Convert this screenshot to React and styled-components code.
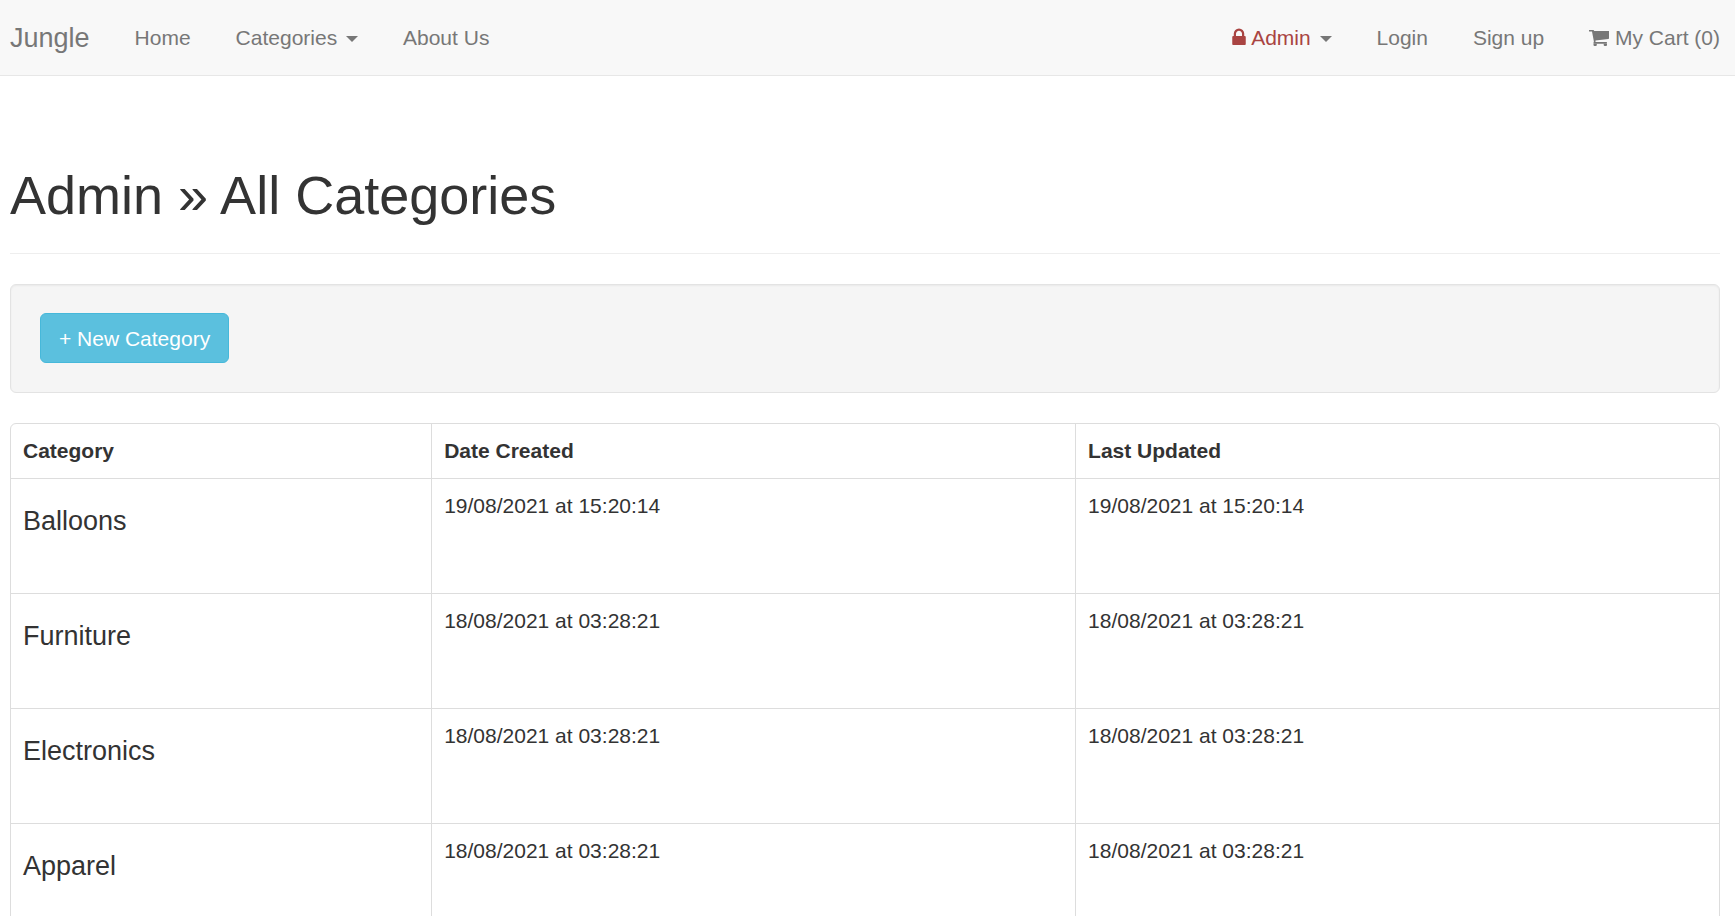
import React from 'react';
import styled, { createGlobalStyle } from 'styled-components';

const GlobalStyle = createGlobalStyle`
  *, *::before, *::after { box-sizing: border-box; }
  body {
    margin: 0;
    background: #fff;
    color: #333;
    font-family: "Liberation Sans", Arial, sans-serif;
    font-size: 21px;
    line-height: 30px;
  }
`;

const Navbar = styled.nav`
  display: flex;
  align-items: center;
  justify-content: space-between;
  flex-wrap: wrap;
  min-height: 76px;
  padding: 0 15px 0 10px;
  background: #f8f8f8;
  border-bottom: 1px solid #e7e7e7;
`;

const NavGroup = styled.div`
  display: flex;
  align-items: center;
  gap: 45px;
`;

const Brand = styled.a`
  color: #777;
  font-size: 27px;
  text-decoration: none;
`;

const NavLink = styled.a`
  color: #777;
  text-decoration: none;
  white-space: nowrap;
`;

const NavToggle = styled.button`
  padding: 0;
  border: 0;
  background: none;
  color: #777;
  font: inherit;
  white-space: nowrap;
  cursor: pointer;
`;

const Danger = styled.span`
  color: #a94442;
`;

const Caret = styled.span`
  display: inline-block;
  margin-left: 3px;
  vertical-align: middle;
  border-top: 6px solid;
  border-right: 6px solid transparent;
  border-left: 6px solid transparent;
`;

const Icon = styled.svg`
  height: 21px;
  vertical-align: -3px;
  fill: currentColor;
`;

const LockIcon = () => (
  <Icon width="14" viewBox="320 0 1152 1792" aria-hidden="true">
    <path d="M640 768h512v-192q0-106-75-181t-181-75-181 75-75 181v192zm832 96v576q0 40-28 68t-68 28h-960q-40 0-68-28t-28-68v-576q0-40 28-68t68-28h32v-192q0-184 132-316t316-132 316 132 132 316v192h32q40 0 68 28t28 68z" />
  </Icon>
);

const CartIcon = () => (
  <Icon width="20" viewBox="0 0 20 21" aria-hidden="true">
    <path d="M0 3h4.200q.8 0 1 1H20v7.200q0 .7-.7.800L6.500 13.500v1.500H17.500q.5 0 .5.800t-.5.900H5q-.6 0-.6-.6l.5-1.600L3 4.500H0z" />
    <path d="M4.500 16.700h3.300v1.300q0 1-1 1H5.500q-1 0-1-1zM14.700 16.700H18v1.300q0 1-1 1h-1.300q-1 0-1-1z" />
  </Icon>
);

const Main = styled.main`
  padding: 89px 15px 0 10px;
`;

const PageHeader = styled.header`
  margin-bottom: 30px;
  padding-bottom: 28px;
  border-bottom: 1px solid #eee;
`;

const Title = styled.h1`
  margin: 0;
  font-size: 54px;
  font-weight: 500;
  line-height: 60px;
`;

const Well = styled.div`
  display: flex;
  margin-bottom: 30px;
  padding: 28px 29px 29px;
  background: #f5f5f5;
  border: 1px solid #e3e3e3;
  border-radius: 6px;
  box-shadow: inset 0 1px 2px rgba(0, 0, 0, 0.05);
`;

const InfoButton = styled.button`
  padding: 10px 18px 8px;
  background: #5bc0de;
  border: 1px solid #46b8da;
  border-radius: 6px;
  color: #fff;
  font: inherit;
  white-space: nowrap;
  cursor: pointer;
`;

const Panel = styled.section`
  border: 1px solid #ddd;
  border-radius: 6px;
`;

const Table = styled.table`
  width: 100%;
  border-collapse: separate;
  border-spacing: 0;
  table-layout: fixed;
`;

const HeadCell = styled.th`
  padding: 12px;
  text-align: left;
  &:first-child { width: 24.6%; }
  & + & { border-left: 1px solid #ddd; }
`;

const Cell = styled.td`
  padding: 12px;
  vertical-align: top;
  border-top: 1px solid #ddd;
  & + & { border-left: 1px solid #ddd; }
`;

const CategoryName = styled.h4`
  margin: 15px 0 45px;
  font-size: 27px;
  font-weight: 500;
  line-height: 30px;
`;

const categories = [
  { name: 'Balloons', created: '19/08/2021 at 15:20:14', updated: '19/08/2021 at 15:20:14' },
  { name: 'Furniture', created: '18/08/2021 at 03:28:21', updated: '18/08/2021 at 03:28:21' },
  { name: 'Electronics', created: '18/08/2021 at 03:28:21', updated: '18/08/2021 at 03:28:21' },
  { name: 'Apparel', created: '18/08/2021 at 03:28:21', updated: '18/08/2021 at 03:28:21' },
];

export default function App() {
  return (
    <>
      <GlobalStyle />
      <Navbar>
        <NavGroup>
          <Brand href="#">Jungle</Brand>
          <NavLink href="#">Home</NavLink>
          <NavToggle type="button" aria-haspopup="true">Categories <Caret /></NavToggle>
          <NavLink href="#">About Us</NavLink>
        </NavGroup>
        <NavGroup>
          <NavToggle type="button" aria-haspopup="true">
            <Danger><LockIcon /> Admin</Danger> <Caret />
          </NavToggle>
          <NavLink href="#">Login</NavLink>
          <NavLink href="#">Sign up</NavLink>
          <NavLink href="#"><CartIcon /> My Cart (0)</NavLink>
        </NavGroup>
      </Navbar>
      <Main>
        <PageHeader>
          <Title>Admin » All Categories</Title>
        </PageHeader>
        <Well>
          <InfoButton type="button">+ New Category</InfoButton>
        </Well>
        <Panel>
          <Table>
            <thead>
              <tr>
                <HeadCell scope="col">Category</HeadCell>
                <HeadCell scope="col">Date Created</HeadCell>
                <HeadCell scope="col">Last Updated</HeadCell>
              </tr>
            </thead>
            <tbody>
              {categories.map((category) => (
                <tr key={category.name}>
                  <Cell><CategoryName>{category.name}</CategoryName></Cell>
                  <Cell>{category.created}</Cell>
                  <Cell>{category.updated}</Cell>
                </tr>
              ))}
            </tbody>
          </Table>
        </Panel>
      </Main>
    </>
  );
}
